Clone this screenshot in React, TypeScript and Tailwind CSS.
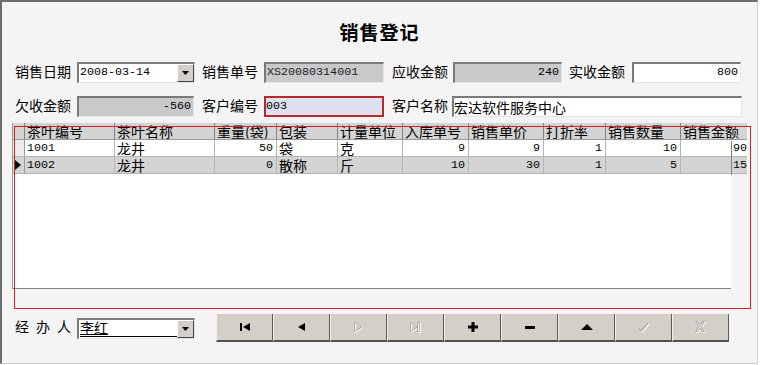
import React from "react";

const CJK = "font-['Noto_Sans_CJK_SC',sans-serif]";
const MONO = "font-['Liberation_Mono','Noto_Sans_CJK_SC',monospace]";

function Label({ children, w }: { children: React.ReactNode; w: string }) {
  return (
    <div className={`${CJK} text-[14px] leading-[18px] text-black whitespace-nowrap ${w}`}>
      {children}
    </div>
  );
}

const sunken =
  "border-t-2 border-l-2 border-t-[#7a7a7a] border-l-[#7a7a7a] border-r border-b border-r-[#e6e6e6] border-b-[#e6e6e6]";

function Field({
  w,
  bg,
  right,
  cjk,
  children,
}: {
  w: string;
  bg: string;
  right?: boolean;
  cjk?: boolean;
  children: React.ReactNode;
}) {
  return (
    <div
      className={`h-[21px] ${w} ${bg} ${sunken} flex items-center ${right ? "justify-end pr-[2px]" : "pl-[0px]"} overflow-hidden whitespace-nowrap ${
        cjk ? `${CJK} text-[14px]` : `${MONO} text-[11.7px]`
      } text-black`}
    >
      {children}
    </div>
  );
}

function DropBtn() {
  return (
    <div className="w-[17px] h-full bg-[#d4d0c8] border border-t-white border-l-white border-r-[#404040] border-b-[#404040] flex items-center justify-center shrink-0">
      <svg width="7" height="4" viewBox="0 0 7 4">
        <polygon points="0,0 7,0 3.5,4" fill="#000" />
      </svg>
    </div>
  );
}

type Col = { h: string; w: string; align: "l" | "r" | "x" };
const cols: Col[] = [
  { h: "茶叶编号", w: "w-[90px]", align: "l" },
  { h: "茶叶名称", w: "w-[100px]", align: "l" },
  { h: "重量(袋)", w: "w-[62px]", align: "r" },
  { h: "包装", w: "w-[61px]", align: "l" },
  { h: "计量单位", w: "w-[65px]", align: "l" },
  { h: "入库单号", w: "w-[66px]", align: "r" },
  { h: "销售单价", w: "w-[75px]", align: "r" },
  { h: "打折率", w: "w-[62px]", align: "r" },
  { h: "销售数量", w: "w-[75px]", align: "r" },
  { h: "销售金额", w: "w-[70px]", align: "x" },
];

const rows: string[][] = [
  ["1001", "龙井", "50", "袋", "克", "9", "9", "1", "10", "90"],
  ["1002", "龙井", "0", "散称", "斤", "10", "30", "1", "5", "150"],
];

const isAscii = (s: string) => /^[\x00-\x7f]+$/.test(s);

function NavIcon({ kind }: { kind: number }) {
  const g = "#a9a9a9";
  switch (kind) {
    case 0:
      return (
        <svg width="10" height="8" viewBox="0 0 10 8">
          <rect x="0" y="0" width="2" height="8" fill="#000" />
          <polygon points="10,0 10,8 3,4" fill="#000" />
        </svg>
      );
    case 1:
      return (
        <svg width="7" height="8" viewBox="0 0 7 8">
          <polygon points="7,0 7,8 0,4" fill="#000" />
        </svg>
      );
    case 2:
      return (
        <svg width="11" height="11" viewBox="0 0 11 11">
          <polygon points="2.5,1.5 2.5,10.5 9.5,6" fill="none" stroke="#fff" strokeWidth="1" />
          <polygon points="1.5,0.5 1.5,9.5 8.5,5" fill="none" stroke={g} strokeWidth="1" />
        </svg>
      );
    case 3:
      return (
        <svg width="13" height="11" viewBox="0 0 13 11">
          <polygon points="2.5,1.5 2.5,10.5 9,6" fill="none" stroke="#fff" />
          <rect x="9.5" y="1.5" width="2" height="9" fill="none" stroke="#fff" />
          <polygon points="1.5,0.5 1.5,9.5 8,5" fill="none" stroke={g} />
          <rect x="8.5" y="0.5" width="2" height="9" fill="none" stroke={g} />
        </svg>
      );
    case 4:
      return (
        <svg width="10" height="10" viewBox="0 0 10 10">
          <rect x="3.5" y="0" width="3" height="10" fill="#000" />
          <rect x="0" y="3.5" width="10" height="3" fill="#000" />
        </svg>
      );
    case 5:
      return (
        <svg width="10" height="3" viewBox="0 0 10 3">
          <rect x="0" y="0" width="10" height="3" fill="#000" />
        </svg>
      );
    case 6:
      return (
        <svg width="12" height="6" viewBox="0 0 12 6">
          <polygon points="0,6 12,6 6,0" fill="#000" />
        </svg>
      );
    case 7:
      return (
        <svg width="12" height="11" viewBox="0 0 12 11">
          <polyline points="2,7 4.5,10 11,2" fill="none" stroke="#fff" strokeWidth="1.2" />
          <polyline points="1,6 3.5,9 10,1" fill="none" stroke={g} strokeWidth="1.2" />
        </svg>
      );
    default:
      return (
        <svg width="13" height="13" viewBox="0 0 13 13">
          <g fill="none" stroke="#fff" strokeWidth="1">
            <polygon points="2.5,1.5 4.5,1.5 7,4.5 9.5,1.5 11.5,1.5 8,6.5 11.5,11.5 9.5,11.5 7,8.5 4.5,11.5 2.5,11.5 6,6.5" />
          </g>
          <g fill="none" stroke={g} strokeWidth="1">
            <polygon points="1.5,0.5 3.5,0.5 6,3.5 8.5,0.5 10.5,0.5 7,5.5 10.5,10.5 8.5,10.5 6,7.5 3.5,10.5 1.5,10.5 5,5.5" />
          </g>
        </svg>
      );
  }
}

export default function App() {
  return (
    <div className="w-[760px] h-[365px] bg-white">
      <div className="w-[758px] h-[364px] bg-[#f4f4f4] border-t-2 border-l-2 border-t-[#6e6e6e] border-l-[#6e6e6e] border-r border-b border-r-[#cfcfcf] border-b-[#cfcfcf] flex flex-col">
        {/* title */}
        <div className="h-[60px] flex items-center justify-center shrink-0">
          <div className={`${CJK} text-[19px] font-bold leading-[24px] text-black tracking-[1px]`}>
            销售登记
          </div>
        </div>

        {/* row 1 */}
        <div className="flex items-start pl-[13px] h-[21px] shrink-0">
          <Label w="w-[62px]">销售日期</Label>
          <div className={`h-[21px] w-[118px] bg-white ${sunken} flex items-stretch`}>
            <div className={`flex-1 flex items-center ${MONO} text-[11.7px] text-black pl-[1px]`}>2008-03-14</div>
            <DropBtn />
          </div>
          <div className="w-[7px]" />
          <Label w="w-[62px]">销售单号</Label>
          <Field w="w-[120px]" bg="bg-[#c9c9cb]">
            <span className="pl-[1px] text-[#222]">XS20080314001</span>
          </Field>
          <div className="w-[8px]" />
          <Label w="w-[61px]">应收金额</Label>
          <Field w="w-[109px]" bg="bg-[#c9c9cb]" right>
            240
          </Field>
          <div className="w-[7px]" />
          <Label w="w-[63px]">实收金额</Label>
          <Field w="w-[109px]" bg="bg-white" right>
            800
          </Field>
        </div>

        {/* row 2 */}
        <div className="flex items-start pl-[13px] h-[21px] mt-[13px] shrink-0">
          <Label w="w-[62px]">欠收金额</Label>
          <Field w="w-[117px]" bg="bg-[#c9c9cb]" right>
            -560
          </Field>
          <div className="w-[8px]" />
          <Label w="w-[62px]">客户编号</Label>
          <div
            className={`h-[21px] w-[120px] bg-[#dfe0f0] border-2 border-[#b52a2a] flex items-center ${MONO} text-[11.7px] text-black`}
          >
            003
          </div>
          <div className="w-[8px]" />
          <Label w="w-[60px]">客户名称</Label>
          <Field w="w-[290px]" bg="bg-white" cjk>
            宏达软件服务中心
          </Field>
        </div>

        {/* grid */}
        <div className="relative ml-[10px] mt-[6px] w-[738px] h-[185px] shrink-0">
          <div className="w-[735px] overflow-hidden border-l border-l-[#9a9a9a]">
            {/* header */}
            <div className="flex h-[17px] bg-[#d4d4d4] border-b border-b-[#9a9a9a] w-[800px]">
              <div className="w-[12px] shrink-0 border-r border-r-[#808080]" />
              {cols.map((c) => (
                <div
                  key={c.h}
                  className={`${c.w} shrink-0 border-r border-r-[#808080] overflow-hidden whitespace-nowrap ${CJK} text-[14px] leading-[16px] text-black pl-[2px]`}
                >
                  {c.h}
                </div>
              ))}
            </div>
            {rows.map((r, ri) => (
              <div
                key={ri}
                className={`flex h-[17px] w-[800px] border-b border-b-[#b4b4b4] ${ri === 1 ? "bg-[#d4d4d4]" : "bg-white"}`}
              >
                <div
                  className={`w-[12px] shrink-0 border-r border-r-[#9a9a9a] flex items-center pl-[2px] ${ri === 1 ? "bg-[#d4d4d4]" : "bg-[#ececec]"}`}
                >
                  {ri === 1 && (
                    <svg width="6" height="10" viewBox="0 0 6 10">
                      <polygon points="0,0 6,5 0,10" fill="#000" />
                    </svg>
                  )}
                </div>
                {r.map((v, ci) => {
                  const a = cols[ci].align;
                  const al = a === "r" ? "justify-end pr-[3px]" : a === "x" ? "pl-[52px]" : "pl-[2px]";
                  return (
                    <div
                      key={ci}
                      className={`${cols[ci].w} shrink-0 border-r border-r-[#b4b4b4] overflow-hidden whitespace-nowrap flex items-center ${al} ${
                        isAscii(v) ? `${MONO} text-[11.7px]` : `${CJK} text-[14px]`
                      } leading-[16px] text-black`}
                    >
                      {v}
                    </div>
                  );
                })}
              </div>
            ))}
          </div>
          {/* empty area */}
          <div className="flex">
            <div className="w-[719px] h-[115px] bg-white border-l border-l-[#9a9a9a] border-b border-b-[#808080]" />
          </div>
          {/* odd vertical line in rows */}
          <div className="absolute left-[719px] top-[18px] w-px h-[34px] bg-[#808080]" />
          {/* red selection rectangle */}
          <div className="absolute left-[2px] top-[3px] w-[737px] h-[183px] border border-[#d42222] pointer-events-none" />
        </div>

        {/* bottom row */}
        <div className="flex items-center pl-[13px] mt-[6px] h-[28px] shrink-0">
          <div className={`${CJK} text-[14px] leading-[18px] text-black whitespace-nowrap w-[62px] -mt-[4px] flex`}>
            <span>经</span>
            <span className="ml-[7px]">办</span>
            <span className="ml-[7px]">人</span>
          </div>
          <div className={`h-[21px] w-[118px] bg-white ${sunken} flex items-stretch`}>
            <div className="flex-1 flex flex-col justify-end pl-[1px]">
              <span className={`${CJK} text-[14px] leading-[15px] text-black underline`}>李红</span>
              <div className="h-[2px] bg-black mt-[1px] mb-[1px]" />
            </div>
            <DropBtn />
          </div>
          <div className="w-[21px]" />
          <div className="flex h-[28px]">
            {[0, 1, 2, 3, 4, 5, 6, 7, 8].map((k) => (
              <div
                key={k}
                className="w-[57px] h-[28px] bg-[#d4d0c8] border-l border-l-[#f0f0f0] border-r border-r-[#5a5a5a] border-b-2 border-b-[#505050] flex items-center justify-center"
              >
                <NavIcon kind={k} />
              </div>
            ))}
          </div>
        </div>
      </div>
    </div>
  );
}
